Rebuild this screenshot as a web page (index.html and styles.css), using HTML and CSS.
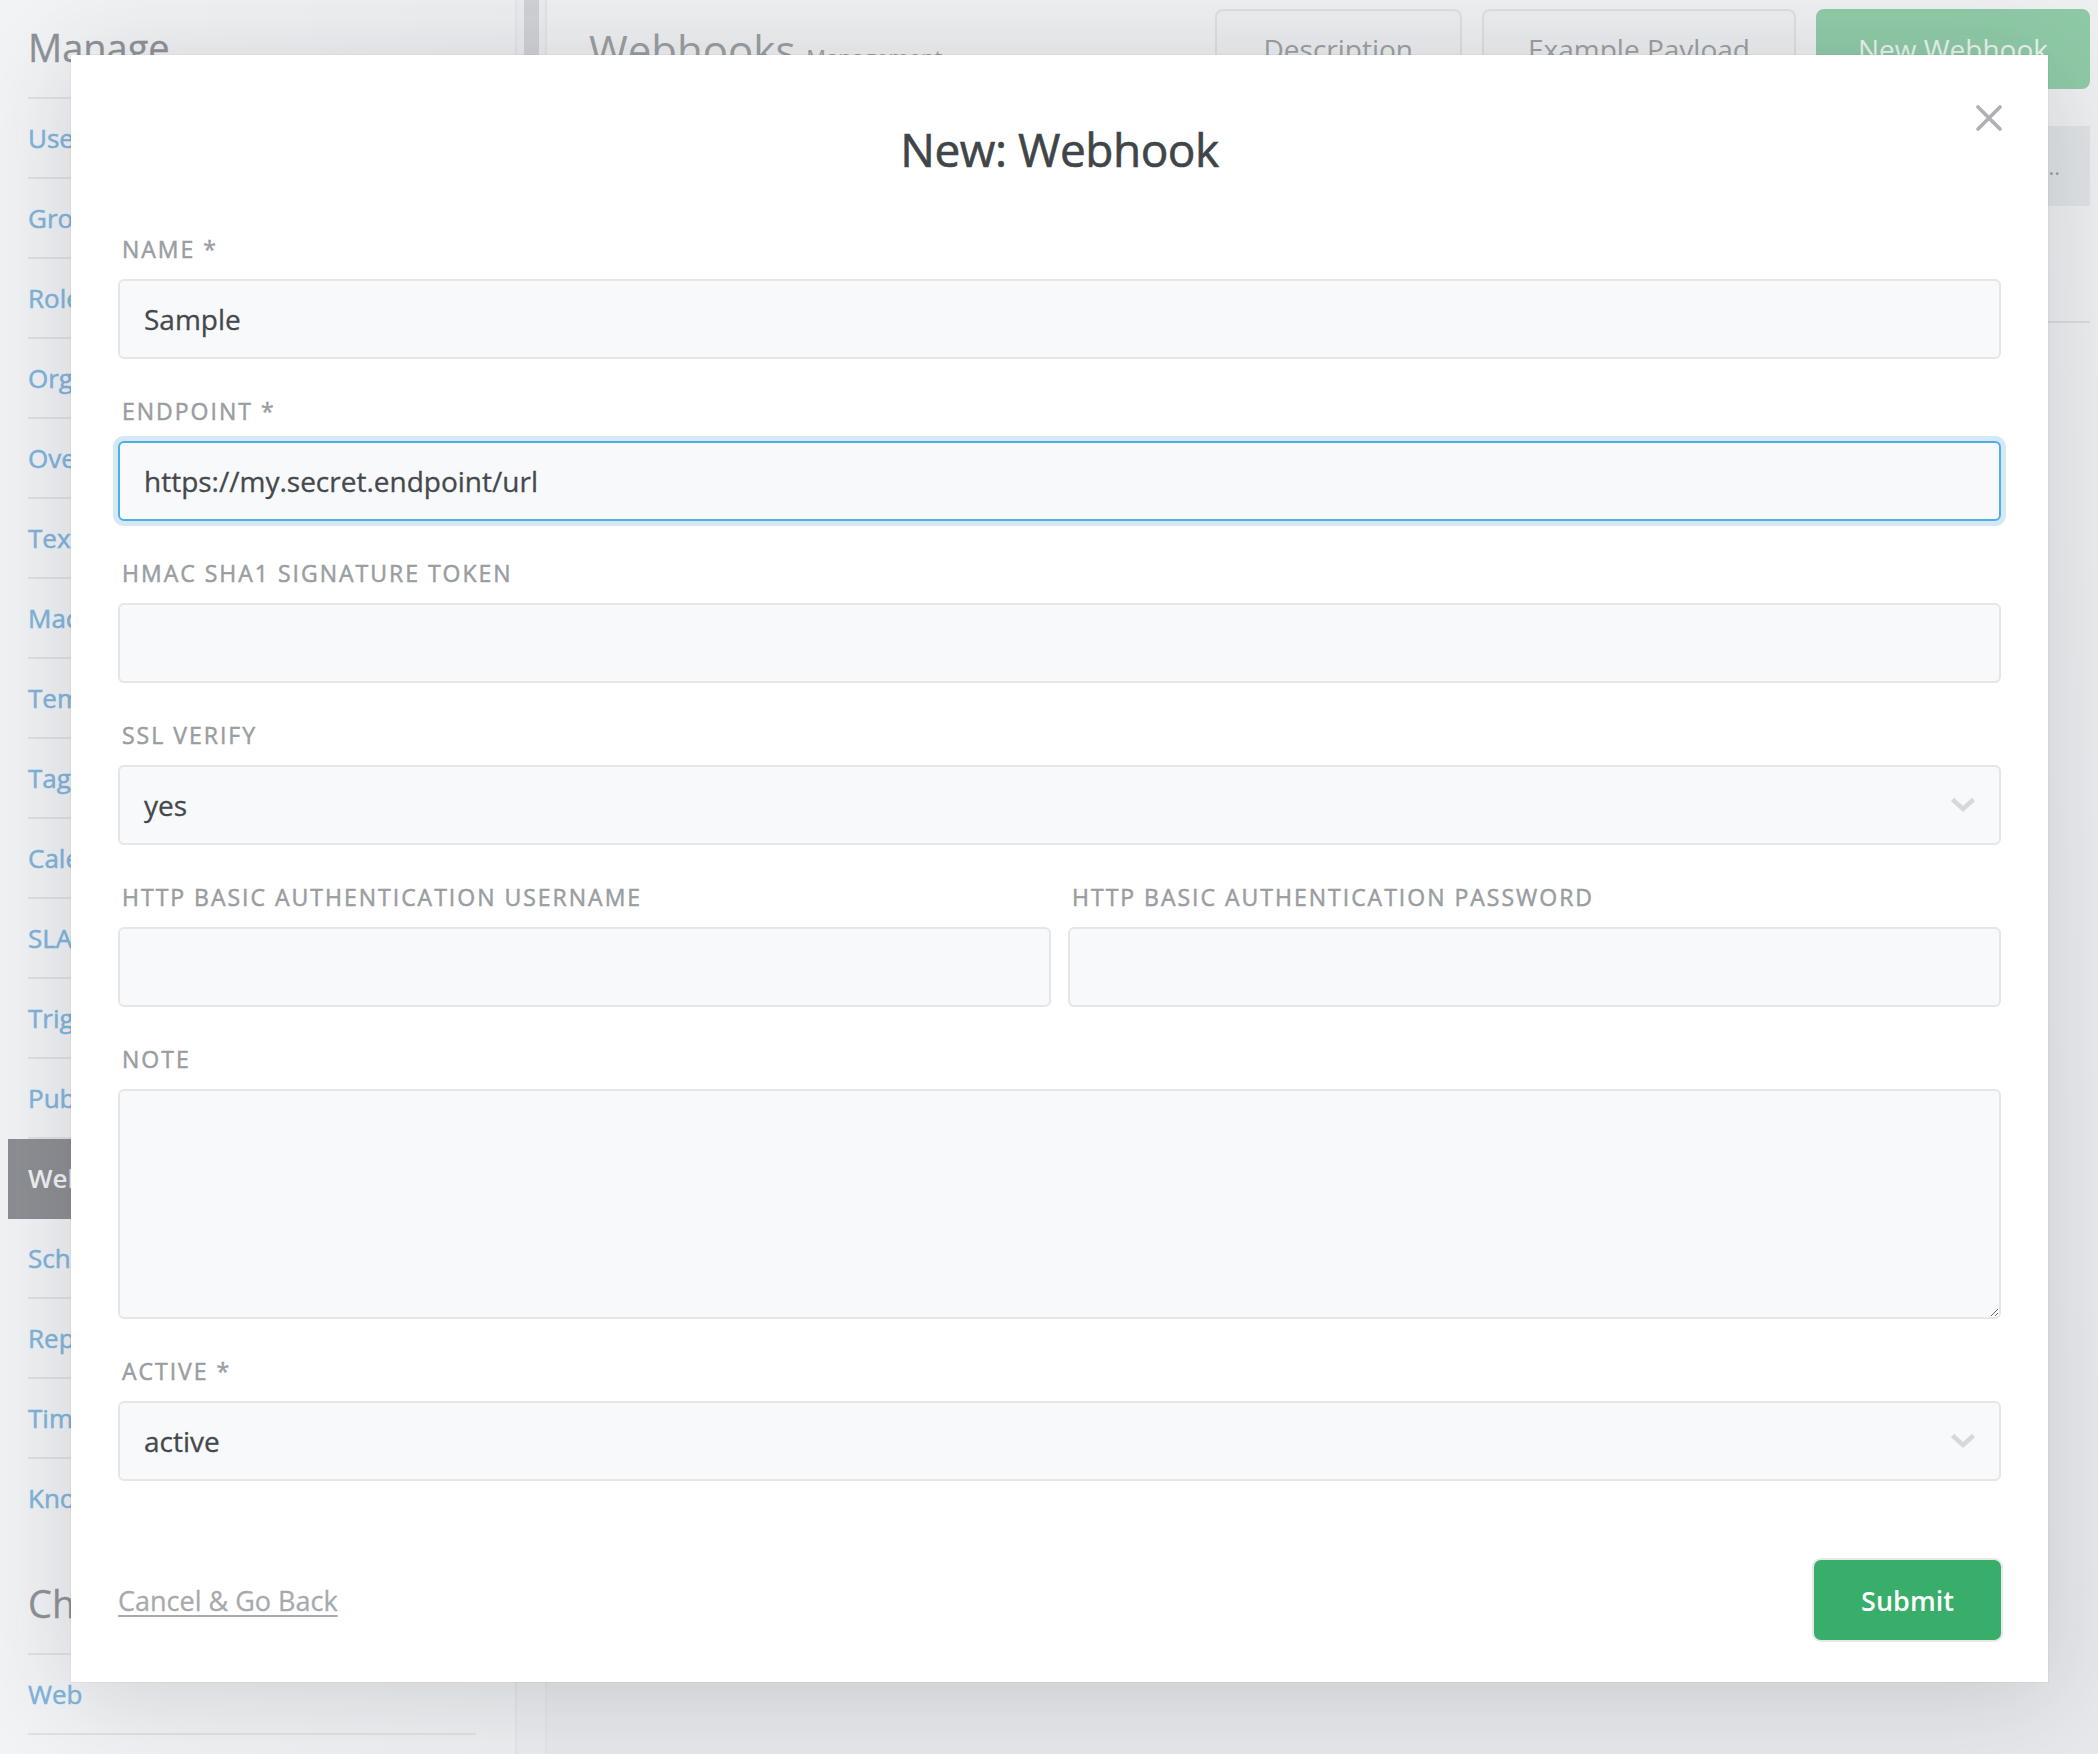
FILE: index.html
```html
<!DOCTYPE html>
<html lang="en">
<head>
<meta charset="utf-8">
<title>New: Webhook</title>
<link rel="stylesheet" href="styles.css">
</head>
<body>
<div class="app">
  <aside class="sidebar">
    <div class="sb-heading">Manage</div>
    <ul class="sb-list">
      <li><a>Users</a></li>
      <li><a>Groups</a></li>
      <li><a>Roles</a></li>
      <li><a>Organizations</a></li>
      <li><a>Overviews</a></li>
      <li><a>Text modules</a></li>
      <li><a>Macros</a></li>
      <li><a>Templates</a></li>
      <li><a>Tags</a></li>
      <li><a>Calendars</a></li>
      <li><a>SLAs</a></li>
      <li><a>Triggers</a></li>
      <li><a>Public Links</a></li>
      <li class="active"><a>Webhooks</a></li>
      <li><a>Scheduler</a></li>
      <li><a>Report Profiles</a></li>
      <li><a>Time Accounting</a></li>
      <li class="no-line"><a>Knowledge Base</a></li>
    </ul>
    <div class="sb-heading sb-heading-2">Channels</div>
    <ul class="sb-list">
      <li><a>Web</a></li>
    </ul>
  </aside>
  <div class="gutter"><div class="thumb"></div></div>
  <main class="main">
    <header class="page-header">
      <h1 class="page-title">Webhooks <small>Management</small></h1>
      <div class="actions">
        <button class="btn">Description</button>
        <button class="btn">Example Payload</button>
        <button class="btn btn-green">New Webhook</button>
      </div>
    </header>
    <div class="table">
      <div class="table-head"><span class="dots">..</span></div>
      <div class="table-row"></div>
    </div>
  </main>
</div>

<div class="modal">
  <button class="close" aria-label="Close">
    <svg width="26" height="26" viewBox="0 0 26 26"><path d="M2 2 L24 24 M24 2 L2 24" stroke="#aeb0b3" stroke-width="3.6" stroke-linecap="round" fill="none"/></svg>
  </button>
  <h2 class="modal-title">New: Webhook</h2>
  <form class="form">
    <div class="field">
      <label class="label">Name *</label>
      <input class="control" type="text" value="Sample">
    </div>
    <div class="field">
      <label class="label">Endpoint *</label>
      <input class="control focus" type="text" value="https://my.secret.endpoint/url">
    </div>
    <div class="field">
      <label class="label">HMAC SHA1 Signature Token</label>
      <input class="control" type="text" value="">
    </div>
    <div class="field">
      <label class="label">SSL Verify</label>
      <div class="control select"><span>yes</span>
        <svg class="chev" width="26" height="16" viewBox="0 0 26 16"><path d="M2.5 2.5 L13 12 L23.5 2.5" stroke="#d6d8db" stroke-width="4.6" fill="none"/></svg>
      </div>
    </div>
    <div class="field two">
      <div>
        <label class="label">HTTP Basic Authentication Username</label>
        <input class="control" type="text" value="">
      </div>
      <div>
        <label class="label">HTTP Basic Authentication Password</label>
        <input class="control" type="text" value="">
      </div>
    </div>
    <div class="field">
      <label class="label">Note</label>
      <textarea class="control textarea"></textarea>
    </div>
    <div class="field">
      <label class="label">Active *</label>
      <div class="control select"><span>active</span>
        <svg class="chev" width="26" height="16" viewBox="0 0 26 16"><path d="M2.5 2.5 L13 12 L23.5 2.5" stroke="#d6d8db" stroke-width="4.6" fill="none"/></svg>
      </div>
    </div>
    <div class="footer">
      <a class="cancel">Cancel &amp; Go Back</a>
      <button class="submit" type="button">Submit</button>
    </div>
  </form>
</div>
</body>
</html>
```

FILE: styles.css
```css
html, body {
  margin: 0;
  padding: 0;
}
body {
  width: 2098px;
  height: 1754px;
  overflow: hidden;
  font-family: "Open Sans", "Noto Sans", "DejaVu Sans", sans-serif;
  background: #e9ebee;
  position: relative;
}

.app {
  display: flex;
  height: 1754px;
}

/* Sidebar */
.sidebar {
  width: 517px;
  box-sizing: border-box;
  flex: none;
  padding: 0 39px 0 28px;
  background: linear-gradient(90deg, #f2f3f5 0%, #eceef0 100%);
  border-right: 2px solid #e2e4e7;
}
.sb-heading {
  height: 97px;
  line-height: 94px;
  font-size: 38px;
  color: #8e9296;
  border-bottom: 2px solid #dfe1e4;
  -webkit-text-stroke: 0.3px currentColor;
}
.sb-heading-2 {
  height: 114px;
  line-height: 128px;
}
.sb-list {
  list-style: none;
  margin: 0;
  padding: 0;
}
.sb-list li {
  height: 78px;
  border-bottom: 2px solid #dfe1e4;
}
.sb-list li.no-line {
  border-bottom-color: transparent;
}
.sb-list a {
  display: block;
  height: 80px;
  line-height: 78px;
  font-size: 26px;
  color: #80b4dc;
  white-space: nowrap;
  -webkit-text-stroke: 0.5px currentColor;
}
.sb-list li.active a {
  margin: 0 -20px;
  padding: 0 20px;
  background: #8c8e93;
  color: #f2f2f3;
  font-weight: 600;
  -webkit-text-stroke: 0;
}

.gutter {
  width: 28px;
  flex: none;
  display: flex;
  justify-content: center;
}
.thumb {
  width: 15px;
  height: 420px;
  background: #cfd1d4;
}

/* Main */
.main {
  flex: 1;
  min-width: 0;
  border-left: 2px solid #e2e4e7;
  padding: 9px 8px 0 42px;
  background: linear-gradient(180deg, #eeeff1 0%, #e6e8eb 100%);
}
.page-header {
  display: flex;
  align-items: center;
  height: 80px;
}
.page-title {
  flex: 1;
  margin: 0;
  font-size: 42px;
  font-weight: 400;
  color: #9a9da0;
}
.page-title small {
  font-size: 22px;
}
.actions {
  display: flex;
  gap: 20px;
}
.btn {
  height: 80px;
  padding: 0 44px;
  border: 2px solid #dcdee1;
  border-radius: 8px;
  background: #ebedef;
  font-family: inherit;
  font-size: 28px;
  color: #9c9fa2;
}
.btn:first-child {
  padding: 0 47px;
}
.btn-green {
  padding: 0 40px;
  background: #8fcaa7;
  border-color: #8fcaa7;
  color: #e9f4ed;
}
.table {
  margin-top: 37px;
}
.table-head {
  height: 80px;
  background: #dfe2e5;
  display: flex;
  justify-content: flex-end;
  align-items: center;
  padding-right: 30px;
}
.dots {
  color: #9a9da0;
  font-size: 22px;
}
.table-row {
  height: 115px;
  border-bottom: 2px solid #d9dcdf;
}

/* Modal */
.modal {
  position: absolute;
  left: 71px;
  top: 55px;
  width: 1977px;
  box-sizing: border-box;
  padding: 66px 47px 42px;
  background: #fff;
  box-shadow: 0 12px 90px rgba(40, 50, 60, 0.17), 0 0 0 1px rgba(0, 0, 0, 0.03);
}
.close {
  position: absolute;
  top: 50px;
  right: 46px;
  width: 26px;
  height: 26px;
  padding: 0;
  border: 0;
  background: none;
}
.close svg {
  display: block;
}
.modal-title {
  margin: 0;
  text-align: center;
  font-size: 46px;
  line-height: 56px;
  font-weight: 400;
  letter-spacing: -0.5px;
  color: #3f4548;
  -webkit-text-stroke: 0.6px currentColor;
}
.form {
  margin: 57px 0 0;
}
.field {
  margin-bottom: 37px;
}
.field.two {
  display: grid;
  grid-template-columns: 1fr 1fr;
  gap: 17px;
}
.label {
  display: block;
  margin: 0 0 15px 4px;
  font-size: 23px;
  line-height: 30px;
  letter-spacing: 2px;
  text-transform: uppercase;
  color: #9a9da1;
  -webkit-text-stroke: 0.5px currentColor;
}
.control {
  display: block;
  width: 100%;
  height: 80px;
  box-sizing: border-box;
  margin: 0;
  padding: 0 24px;
  border: 2px solid #e5e6e8;
  border-radius: 6px;
  background: #f8f9fa;
  font-family: inherit;
  font-size: 28px;
  color: #45494d;
  outline: none;
  -webkit-text-stroke: 0.3px currentColor;
}
.control.focus {
  border-color: #4fafe4;
  box-shadow: 0 0 0 5px #d4e8f5;
}
.select {
  display: flex;
  align-items: center;
  justify-content: space-between;
  padding-right: 23px;
}
.chev {
  display: block;
}
.textarea {
  height: 230px;
  padding: 20px 24px;
  resize: vertical;
}
.footer {
  margin-top: 79px;
  display: flex;
  justify-content: space-between;
  align-items: center;
}
.cancel {
  font-size: 27px;
  color: #a7aaad;
  text-decoration: underline;
  text-underline-offset: 4px;
  text-decoration-thickness: 2px;
  -webkit-text-stroke: 0.3px currentColor;
}
.submit {
  width: 187px;
  height: 80px;
  border: 0;
  border-radius: 7px;
  background: #39ad6a;
  color: #fff;
  font-family: inherit;
  font-size: 27px;
  font-weight: 600;
  box-shadow: 0 0 0 2px #e6e8ea;
}
```
